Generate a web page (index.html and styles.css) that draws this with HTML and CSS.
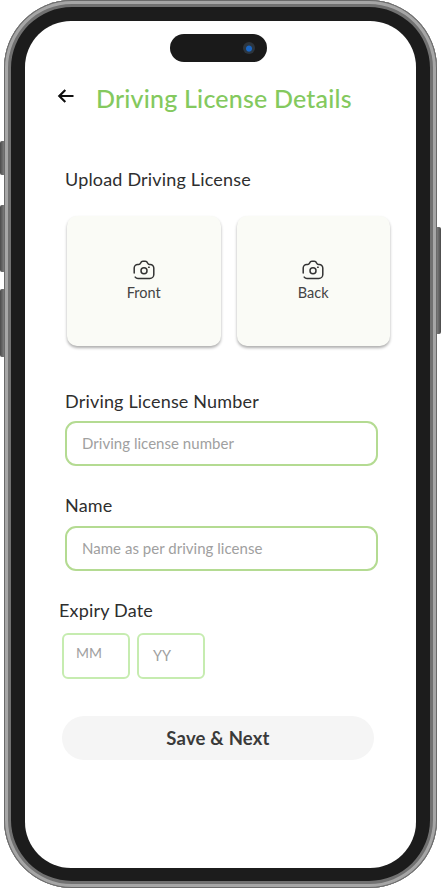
FILE: index.html
```html
<!DOCTYPE html>
<html lang="en">
<head>
<meta charset="utf-8">
<title>Driving License Details</title>
<link rel="stylesheet" href="styles.css">
</head>
<body>
<div class="device">
  <span class="side-btn left b1"></span>
  <span class="side-btn left b2"></span>
  <span class="side-btn left b3"></span>
  <span class="side-btn right b4"></span>
  <main class="screen">
    <div class="island"><span class="lens"></span></div>
    <header class="header">
      <svg class="back" viewBox="0 0 18 16" width="18" height="16" aria-hidden="true"><path d="M16.500 8H2.500M8.300 2 2.300 8l6 6" fill="none" stroke="#111" stroke-width="2.200"/></svg>
      <h1 class="title">Driving License Details</h1>
    </header>
    <h2 class="label upload-label">Upload Driving License</h2>
    <div class="cards">
      <div class="card">
        <svg class="cam" viewBox="0 0 22 20" width="22" height="20" aria-hidden="true"><path d="M1.200 13V8a3.500 3.500 0 0 1 3.500-3.500h1c1 0 1.500-.6 2-1.600.4-1 1-1.600 2.200-1.600h2.400c1.200 0 1.800.6 2.200 1.600.5 1 1 1.600 2 1.600h.8a3.500 3.500 0 0 1 3.500 3.500v6.500a4 4 0 0 1-4 4H5a3.500 3.500 0 0 1-2.800-1.400M15.600 7.300h.6"/><circle cx="11" cy="10.800" r="3"/></svg>
        <span class="card-text">Front</span>
      </div>
      <div class="card">
        <svg class="cam" viewBox="0 0 22 20" width="22" height="20" aria-hidden="true"><path d="M1.200 13V8a3.500 3.500 0 0 1 3.500-3.500h1c1 0 1.500-.6 2-1.600.4-1 1-1.600 2.200-1.600h2.400c1.200 0 1.800.6 2.200 1.600.5 1 1 1.600 2 1.600h.8a3.500 3.500 0 0 1 3.500 3.500v6.500a4 4 0 0 1-4 4H5a3.500 3.500 0 0 1-2.800-1.400M15.600 7.300h.6"/><circle cx="11" cy="10.800" r="3"/></svg>
        <span class="card-text">Back</span>
      </div>
    </div>
    <h2 class="label number-label">Driving License Number</h2>
    <div class="field">Driving license number</div>
    <h2 class="label name-label">Name</h2>
    <div class="field">Name as per driving license</div>
    <h2 class="label expiry-label">Expiry Date</h2>
    <div class="date-row">
      <div class="date mm">MM</div>
      <div class="date yy">YY</div>
    </div>
    <button class="save" type="button">Save &amp; Next</button>
  </main>
</div>
</body>
</html>
```
FILE: styles.css
```css
* { box-sizing: border-box; }
html, body { margin: 0; padding: 0; background: #fff; }
body { width: 441px; height: 889px; overflow: hidden; font-family: "Lato", "Open Sans", sans-serif; padding-left: 4px; }
.device {
  position: relative;
  width: 433px;
  height: 888px;
  padding: 21px 21px 20px;
  border-radius: 68px;
  background: #1c1c1c;
  box-shadow: inset 0 0 0 1px #6a6a6a, inset 0 0 0 4px #a6a6a6, inset 0 0 0 7px #717171;
}
.side-btn { position: absolute; width: 4px; background: linear-gradient(90deg, #4a4a4a, #7c7c7c); }
.side-btn.left { left: -4px; border-radius: 2px 0 0 2px; }
.side-btn.right { right: -4px; border-radius: 0 2px 2px 0; background: linear-gradient(90deg, #7c7c7c, #4a4a4a); }
.b1 { top: 141px; height: 34px; }
.b2 { top: 205px; height: 67px; }
.b3 { top: 289px; height: 68px; }
.b4 { top: 227px; height: 107px; }
.screen {
  width: 391px;
  height: 847px;
  padding-top: 13px;
  border-radius: 46px;
  background: #fff;
  overflow: hidden;
}
.island {
  display: flex;
  align-items: center;
  justify-content: flex-end;
  width: 97px;
  height: 28px;
  margin-left: 145px;
  padding-right: 12px;
  border-radius: 14px;
  background: #1a1a1a;
}
.lens {
  width: 12px;
  height: 12px;
  border-radius: 50%;
  background: radial-gradient(circle at 50% 55%, #1a66c4 0 2.500px, #2a3642 3.500px, #333 100%);
}
.header { display: flex; align-items: center; height: 30px; margin-top: 22px; padding-left: 32px; }
.back { margin-top: -7px; flex: none; }
.title { margin: 0 0 2px 21px; font-size: 25px; font-weight: 500; letter-spacing: .2px; color: #84c95e; white-space: nowrap; }
.label { margin: 0; font-size: 18px; line-height: 22px; font-weight: 400; letter-spacing: .18px; color: #2e2e2e; white-space: nowrap; }
.upload-label { margin: 54px 0 0 40px; }
.cards { display: flex; gap: 16px; margin: 26px 0 0 42px; }
.card {
  display: flex;
  flex-direction: column;
  align-items: center;
  width: 153.500px;
  height: 130px;
  padding-top: 44px;
  border-radius: 10px;
  background: #fafbf6;
  box-shadow: 0 2px 3px rgba(0, 0, 0, .32);
}
.cam { fill: none; stroke: #333; stroke-width: 1.500; stroke-linecap: round; }
.card-text { margin-top: 4px; font-size: 14.500px; line-height: 18px; color: #444; }
.number-label { margin: 44px 0 0 40px; }
.name-label { margin: 28px 0 0 40px; }
.expiry-label { margin: 28px 0 0 34px; }
.field {
  display: flex;
  align-items: center;
  width: 313px;
  height: 45px;
  margin: 9px 0 0 40px;
  padding: 0 0 1px 15px;
  border: 2px solid #b4db92;
  border-radius: 11px;
  font-size: 15px;
  letter-spacing: .03px;
  color: #a0a0a0;
}
.name-label + .field { margin-top: 10px; }
.date-row { display: flex; gap: 7px; margin: 12px 0 0 37px; }
.date {
  width: 68px;
  height: 46px;
  padding-left: 12px;
  border: 2px solid #c6ecb0;
  border-radius: 6px;
  font-size: 14.500px;
  color: #a0a0a0;
}
.mm { padding-top: 9px; font-size: 14px; }
.yy { padding-top: 12px; padding-left: 14px; }
.save {
  display: block;
  width: 312px;
  height: 44px;
  margin: 37px 0 0 37px;
  border: 0;
  border-radius: 22px;
  background: #f5f5f5;
  font-family: inherit;
  font-size: 18.500px;
  font-weight: 700;
  letter-spacing: .2px;
  color: #3a3a3a;
}
```
